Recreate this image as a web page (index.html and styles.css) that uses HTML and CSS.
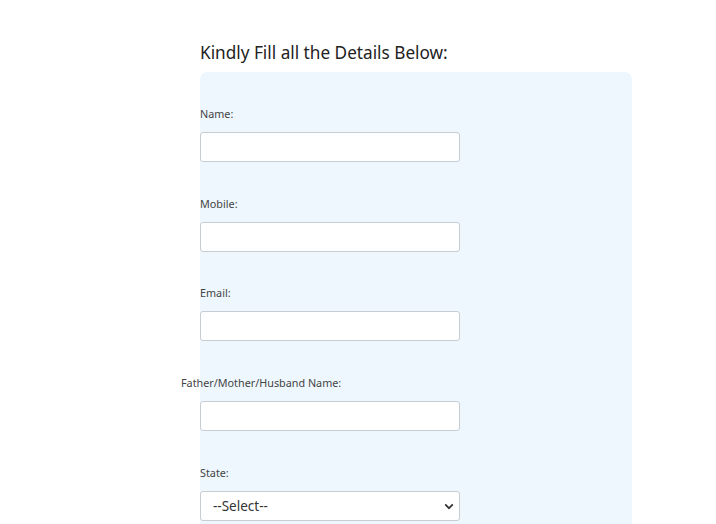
FILE: index.html
```html
<!DOCTYPE html>
<html>
<head>
<meta charset="utf-8">
<link rel="stylesheet" href="styles.css">
</head>
<body>
<div class="wrap">
  <h2 class="title">Kindly Fill all the Details Below:</h2>
  <form class="panel">
    <div class="field">
      <label class="label">Name:</label>
      <input class="input" type="text">
    </div>
    <div class="field">
      <label class="label">Mobile:</label>
      <input class="input" type="text">
    </div>
    <div class="field">
      <label class="label">Email:</label>
      <input class="input" type="text">
    </div>
    <div class="field">
      <label class="label label-wide">Father/Mother/Husband Name:</label>
      <input class="input" type="text">
    </div>
    <div class="field">
      <label class="label">State:</label>
      <div class="select-box">
        <select class="select">
          <option>--Select--</option>
        </select>
        <svg class="chev" width="10" height="7" viewBox="0 0 10 7"><path d="M1.2 1.4 L5 5.2 L8.8 1.4" fill="none" stroke="#333" stroke-width="1.7"/></svg>
      </div>
    </div>
  </form>
</div>
</body>
</html>
```
FILE: styles.css
```css
html, body {
  margin: 0;
  padding: 0;
  background: #ffffff;
  font-family: "Noto Sans", "Open Sans", sans-serif;
  overflow: hidden;
}
.wrap {
  margin-left: 200px;
  width: 432px;
  padding-top: 42px;
}
.title {
  margin: 0 0 8px 0;
  font-size: 17.2px;
  line-height: 22px;
  font-weight: 400;
  color: #222;
}
.panel {
  box-sizing: border-box;
  background: #eef7fe;
  border-radius: 7px 7px 0 0;
  padding-top: 35px;
  height: 452px;
  margin: 0;
  display: flex;
  flex-direction: column;
  gap: 34.7px;
}
.field {
  display: flex;
  flex-direction: column;
  align-items: flex-start;
}
.label {
  display: block;
  font-size: 10.8px;
  line-height: 14px;
  color: #444;
  margin-bottom: 11px;
  white-space: nowrap;
}
.label-wide {
  margin-left: -19px;
}
.input {
  box-sizing: border-box;
  width: 260px;
  height: 30px;
  border: 1px solid #c8cdd2;
  border-radius: 3px;
  background: #fff;
  margin: 0;
  padding: 0 10px;
}
.select-box {
  position: relative;
  width: 260px;
  height: 30px;
}
.select {
  box-sizing: border-box;
  width: 260px;
  height: 30px;
  border: 1px solid #c8cdd2;
  border-radius: 3px;
  background: #fff;
  margin: 0;
  padding: 0 0 0 12px;
  font-family: "Noto Sans", "Open Sans", sans-serif;
  font-size: 13.5px;
  color: #333;
  appearance: none;
  -webkit-appearance: none;
}
.chev {
  position: absolute;
  right: 6px;
  top: 12px;
  pointer-events: none;
}
```
